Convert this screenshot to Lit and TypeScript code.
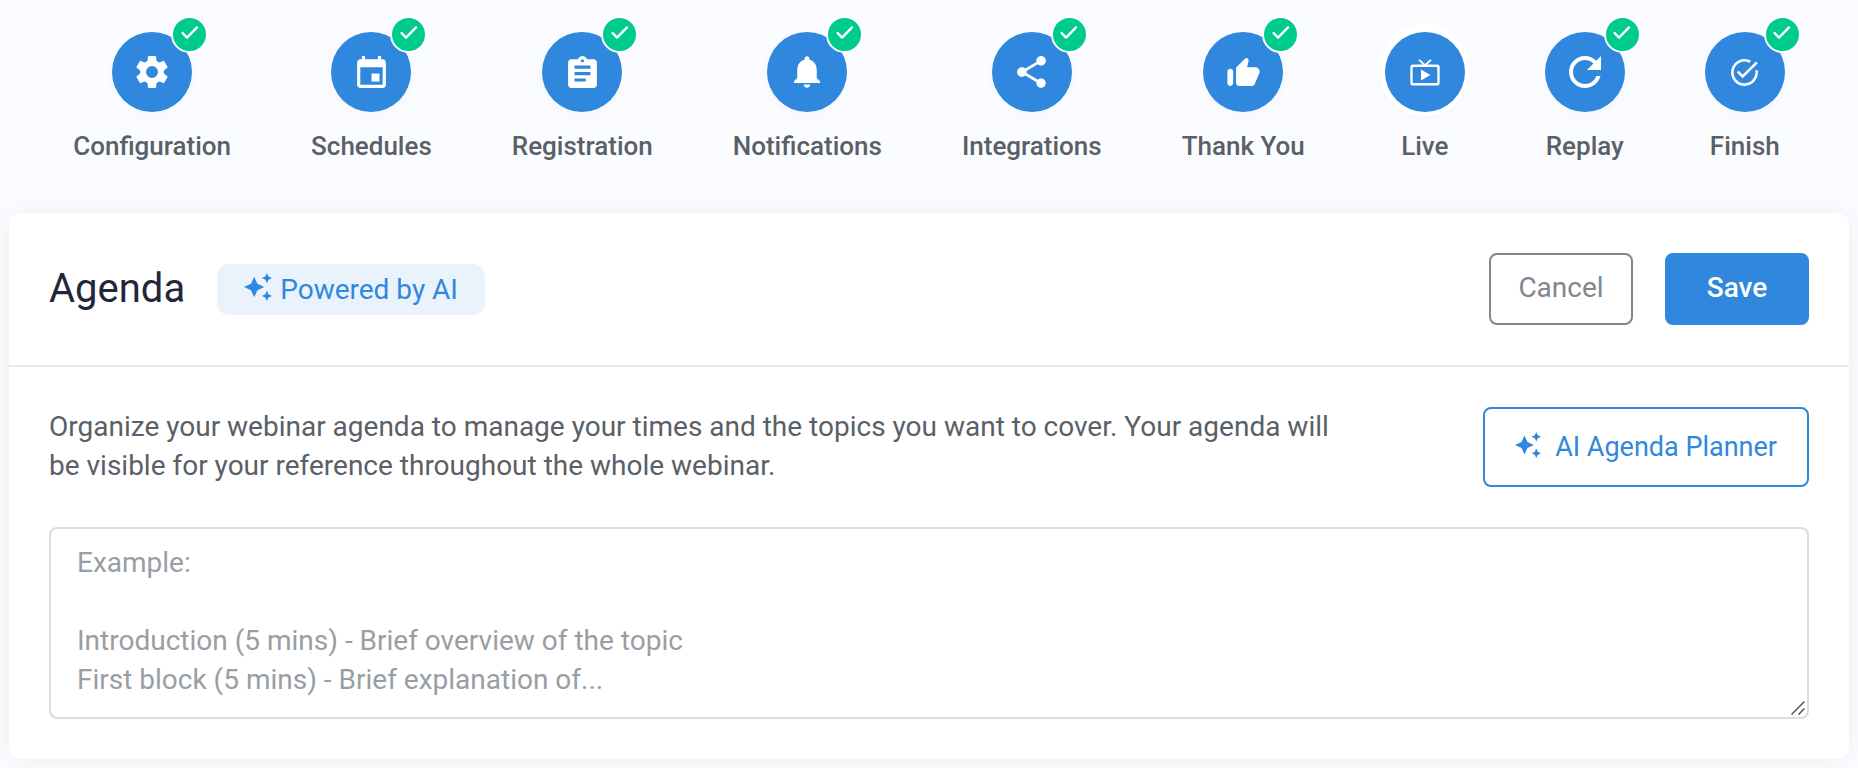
import { LitElement, html, css, svg, nothing } from "lit";
import { customElement, state } from "lit/decorators.js";

interface Step {
  label: string;
  done: boolean;
  viewBox: string;
  width: number;
  height: number;
  icon: unknown;
}

const steps: Step[] = [
  {
    label: "Configuration",
    done: true,
    viewBox: "2 2 20 20",
    width: 32,
    height: 32,
    icon: svg`<path d="M19.43 12.98c.04-.32.07-.64.07-.98s-.03-.66-.07-.98l2.11-1.65c.19-.15.24-.42.12-.64l-2-3.46c-.12-.22-.39-.3-.61-.22l-2.49 1c-.52-.4-1.08-.73-1.69-.98l-.38-2.65C14.46 2.18 14.25 2 14 2h-4c-.25 0-.46.18-.49.42l-.38 2.65c-.61.25-1.17.59-1.69.98l-2.49-1c-.23-.09-.49 0-.61.22l-2 3.46c-.13.22-.07.49.12.64l2.11 1.65c-.04.32-.07.65-.07.98s.03.66.07.98l-2.11 1.65c-.19.15-.24.42-.12.64l2 3.46c.12.22.39.3.61.22l2.49-1c.52.4 1.08.73 1.69.98l.38 2.65c.03.24.24.42.49.42h4c.25 0 .46-.18.49-.42l.38-2.65c.61-.25 1.17-.59 1.69-.98l2.49 1c.23.09.49 0 .61-.22l2-3.46c.12-.22.07-.49-.12-.64l-2.11-1.65zM12 15.75a3.75 3.75 0 1 1 0-7.5 3.75 3.75 0 0 1 0 7.5z"/>`,
  },
  {
    label: "Schedules",
    done: true,
    viewBox: "3 1 18 20",
    width: 29,
    height: 32,
    icon: svg`<path d="M17 12h-5v5h5v-5zM16 1v2H8V1H6v2H5c-1.11 0-1.99.9-1.99 2L3 19c0 1.1.89 2 2 2h14c1.1 0 2-.9 2-2V5c0-1.1-.9-2-2-2h-1V1h-2zm3 18H5V8h14v11z"/>`,
  },
  {
    label: "Registration",
    done: true,
    viewBox: "3 1 18 20",
    width: 29,
    height: 32,
    icon: svg`<path d="M19 3h-4.18C14.4 1.84 13.3 1 12 1c-1.3 0-2.4.84-2.82 2H5c-1.1 0-2 .9-2 2v14c0 1.1.9 2 2 2h14c1.1 0 2-.9 2-2V5c0-1.1-.9-2-2-2zm-7 0c.55 0 1 .45 1 1s-.45 1-1 1-1-.45-1-1 .45-1 1-1zm2 14H7v-2h7v2zm3-4H7v-2h10v2zm0-4H7V7h10v2z"/>`,
  },
  {
    label: "Notifications",
    done: true,
    viewBox: "4 2.5 16 19.5",
    width: 26,
    height: 32,
    icon: svg`<path d="M12 22c1.1 0 2-.9 2-2h-4c0 1.1.89 2 2 2zm6-6v-5c0-3.07-1.64-5.64-4.5-6.32V4c0-.83-.67-1.5-1.5-1.5s-1.5.67-1.5 1.5v.68C7.63 5.36 6 7.92 6 11v5l-2 2v1h16v-1l-2-2z"/>`,
  },
  {
    label: "Integrations",
    done: true,
    viewBox: "3 2 18 20",
    width: 29,
    height: 32,
    icon: svg`<path d="M18 16.08c-.76 0-1.44.3-1.96.77L8.91 12.7c.05-.23.09-.46.09-.7s-.04-.47-.09-.7l7.05-4.11c.54.5 1.25.81 2.04.81 1.66 0 3-1.34 3-3s-1.34-3-3-3-3 1.34-3 3c0 .24.04.47.09.7L8.04 9.81C7.5 9.31 6.79 9 6 9c-1.66 0-3 1.34-3 3s1.34 3 3 3c.79 0 1.5-.31 2.04-.81l7.12 4.16c-.05.21-.08.43-.08.65 0 1.61 1.31 2.92 2.92 2.92 1.61 0 2.92-1.31 2.92-2.92s-1.31-2.92-2.92-2.92z"/>`,
  },
  {
    label: "Thank You",
    done: true,
    viewBox: "1 1.6 22.3 19.4",
    width: 33,
    height: 28,
    icon: svg`<path d="M13.12 2.06 7.58 7.6c-.37.37-.58.88-.58 1.41V19c0 1.1.9 2 2 2h9c.8 0 1.52-.48 1.84-1.21l3.26-7.61C23.94 10.2 22.49 8 20.34 8h-5.65l.95-4.58c.1-.5-.05-1.01-.41-1.37-.59-.58-1.53-.58-2.11.01zM3 21c1.1 0 2-.9 2-2v-8c0-1.1-.9-2-2-2s-2 .9-2 2v8c0 1.1.9 2 2 2z"/>`,
  },
  {
    label: "Live",
    done: false,
    viewBox: "0 0 30 27",
    width: 30,
    height: 27,
    icon: svg`<rect x="1.5" y="6.7" width="27" height="18.6" rx="1.6" fill="none" stroke="currentColor" stroke-width="2.4"/><path d="M9 .8l6 5.4L21 .8" fill="none" stroke="currentColor" stroke-width="1.8"/><path d="M11 10.6v10.8l9.4-5.4z"/>`,
  },
  {
    label: "Replay",
    done: true,
    viewBox: "4 4 16 16",
    width: 32,
    height: 32,
    icon: svg`<path d="M17.65 6.35C16.2 4.9 14.21 4 12 4c-4.42 0-7.99 3.58-7.99 8s3.57 8 7.99 8c3.73 0 6.84-2.55 7.73-6h-2.08c-.82 2.33-3.04 4-5.65 4-3.31 0-6-2.69-6-6s2.69-6 6-6c1.66 0 3.14.69 4.22 1.78L13 11h7V4l-2.35 2.35z"/>`,
  },
  {
    label: "Finish",
    done: true,
    viewBox: "0 0 20 20",
    width: 27,
    height: 27,
    icon: svg`<path d="M14.2 2.04A9 9 0 1 0 18.85 8.36M5 9.3 8.6 12.9 19.2 2.5" fill="none" stroke="currentColor" stroke-width="1.9"/>`,
  },
];

const sparkles = html`<svg class="sparkles" viewBox="1 1 22 22" aria-hidden="true">
  <path d="m19 9 1.25-2.75L23 5l-2.75-1.25L19 1l-1.25 2.75L15 5l2.75 1.25L19 9zm-7.5.5L9 4 6.5 9.5 1 12l5.5 2.5L9 20l2.5-5.5L17 12l-5.5-2.5zM19 15l-1.25 2.75L15 19l2.75 1.25L19 23l1.25-2.75L23 19l-2.75-1.25L19 15z"/>
</svg>`;

const placeholder = [
  "Example:",
  "",
  "Introduction (5 mins) - Brief overview of the topic",
  "First block (5 mins) - Brief explanation of...",
].join("\n");

@customElement("step-nav")
export class StepNav extends LitElement {
  static styles = css`
    :host {
      display: block;
    }
    .steps {
      display: flex;
      justify-content: center;
      gap: 80px;
      margin: 0;
      padding: 32px 0 49px;
      list-style: none;
    }
    .step {
      display: flex;
      flex-direction: column;
      align-items: center;
      gap: 16px;
      min-width: 80px;
      color: #5a6067;
      font-size: 26px;
      font-weight: 500;
      line-height: 36px;
      text-decoration: none;
      white-space: nowrap;
    }
    .disc {
      position: relative;
      display: grid;
      place-items: center;
      width: 80px;
      height: 80px;
      border-radius: 50%;
      background: #2f88dd;
      color: #fff;
      box-shadow: 0 4px 12px rgba(47, 60, 120, 0.03);
    }
    .current {
      box-shadow: 0 -2px 0 6px #fff, 0 4px 16px rgba(47, 60, 120, 0.04);
    }
    .icon {
      display: block;
      fill: currentColor;
    }
    .badge {
      position: absolute;
      top: -16px;
      right: -16px;
      display: grid;
      place-items: center;
      width: 33px;
      height: 33px;
      border: 2px solid #fff;
      border-radius: 50%;
      background: #00cb8f;
    }
    .tick {
      width: 20px;
      height: 20px;
      margin-bottom: 4px;
      fill: none;
      stroke: #fff;
      stroke-width: 2.4;
      stroke-linecap: round;
      stroke-linejoin: round;
    }
  `;

  render() {
    return html`
      <nav aria-label="Webinar setup">
        <ul class="steps">
          ${steps.map(
            (s) => html`<li>
              <a class="step" href="#">
                <span class="disc ${s.done ? "" : "current"}">
                  <svg class="icon" viewBox=${s.viewBox} width=${s.width} height=${s.height} aria-hidden="true">
                    ${s.icon}
                  </svg>
                  ${s.done
                    ? html`<span class="badge">
                        <svg class="tick" viewBox="0 0 20 20" aria-hidden="true">
                          <path d="M2.6 10 7 14.6 17 4.4" />
                        </svg>
                      </span>`
                    : nothing}
                </span>
                ${s.label}
              </a>
            </li>`
          )}
        </ul>
      </nav>
    `;
  }
}

@customElement("app-root")
export class AppRoot extends LitElement {
  @state() private agenda = "";

  static styles = css`
    :host {
      display: block;
      box-sizing: border-box;
      min-height: 100vh;
      padding-bottom: 9px;
      background: #fbfcff;
      color: #5a6067;
      font-family: Roboto, sans-serif;
      font-size: 28px;
      line-height: 39px;
    }
    .card {
      margin: 0 9px;
      border-radius: 12px;
      background: #fff;
      box-shadow: 0 0 24px rgba(40, 50, 90, 0.07);
    }
    .head {
      display: flex;
      align-items: center;
      gap: 32px;
      padding: 40px;
      border-bottom: 2px solid #ebebeb;
    }
    .title {
      margin: 0;
      color: #23263b;
      font-size: 40px;
      font-weight: 400;
      line-height: 48px;
    }
    .powered {
      display: flex;
      align-items: center;
      gap: 8px;
      margin-right: auto;
      padding: 6px 27px;
      border-radius: 12px;
      background: #eaf3fc;
      color: #2f88dd;
    }
    .sparkles {
      flex: none;
      width: 28px;
      height: 28px;
      margin-bottom: 4px;
      fill: currentColor;
    }
    .btn {
      box-sizing: border-box;
      min-width: 144px;
      height: 72px;
      padding: 0 24px 4px;
      border: 2px solid #7f878f;
      border-radius: 8px;
      background: #fff;
      color: #7f878f;
      font: inherit;
      cursor: pointer;
    }
    .primary {
      border-color: #2f88dd;
      background: #2f88dd;
      color: #fff;
      font-weight: 500;
    }
    .planner {
      display: flex;
      flex: none;
      align-items: center;
      gap: 14px;
      height: 80px;
      padding: 0 30px;
      border-color: #2f88dd;
      color: #2f88dd;
      font-size: 27px;
    }
    .planner .sparkles {
      width: 26px;
      height: 26px;
    }
    .body {
      display: grid;
      gap: 40px;
      padding: 40px;
    }
    .intro {
      display: flex;
      align-items: flex-start;
      justify-content: space-between;
      gap: 120px;
    }
    .lead {
      max-width: 1300px;
      margin: 0;
    }
    .field {
      position: relative;
      display: grid;
    }
    .agenda {
      box-sizing: border-box;
      width: 100%;
      height: 192px;
      padding: 14px 26px;
      border: 2px solid #dcdcdc;
      border-radius: 8px;
      outline: none;
      background: #fff;
      color: #5a6067;
      font: inherit;
      resize: vertical;
    }
    .agenda::placeholder {
      color: #989ea4;
      opacity: 1;
    }
    .agenda::-webkit-resizer {
      background: transparent;
    }
    .grip {
      position: absolute;
      right: 4px;
      bottom: 4px;
      width: 14px;
      height: 14px;
      fill: none;
      stroke: #555;
      stroke-width: 1.5;
      pointer-events: none;
    }
  `;

  render() {
    return html`
      <step-nav></step-nav>
      <main class="card">
        <header class="head">
          <h1 class="title">Agenda</h1>
          <span class="powered">${sparkles}Powered by AI</span>
          <button class="btn" type="button">Cancel</button>
          <button class="btn primary" type="button">Save</button>
        </header>
        <section class="body">
          <div class="intro">
            <p class="lead" id="lead">
              Organize your webinar agenda to manage your times and the topics you want to cover. Your agenda will be
              visible for your reference throughout the whole webinar.
            </p>
            <button class="btn planner" type="button">${sparkles}AI Agenda Planner</button>
          </div>
          <div class="field">
            <textarea
              class="agenda"
              aria-label="Agenda"
              aria-describedby="lead"
              placeholder=${placeholder}
              .value=${this.agenda}
              @input=${(e: Event) => (this.agenda = (e.target as HTMLTextAreaElement).value)}
            ></textarea>
            <svg class="grip" viewBox="0 0 14 14" aria-hidden="true">
              <path d="M.5 13.5 13.5.5M7.5 13.5l6-6" />
            </svg>
          </div>
        </section>
      </main>
    `;
  }
}
